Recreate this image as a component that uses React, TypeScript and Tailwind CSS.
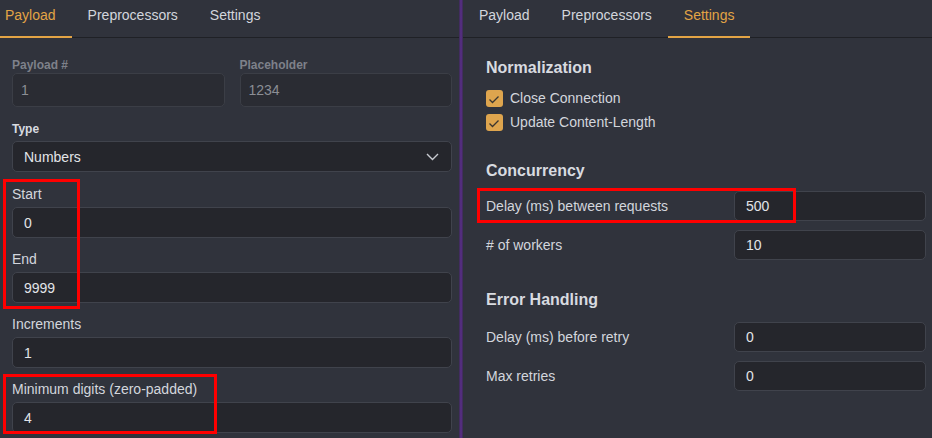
import {ReactNode} from "react";

const font = "font-['Liberation_Sans',Arial,sans-serif]";

function Tabs({active}: {active: string}) {
  const tabs = ["Payload", "Preprocessors", "Settings"];

  return (
    <div className="flex h-[38px] shrink-0 border-b border-[#1f2126]">
      {tabs.map((t) => (
        <div
          key={t}
          className={`-mb-px border-b-2 px-4 pt-[5px] text-sm leading-5 ${
            t === active ? "border-[#e2a445] text-[#e2a445]" : "border-transparent text-[#d3d6dc]"
          }`}
        >
          {t}
        </div>
      ))}
    </div>
  );
}

function Field({label, value}: {label: string; value: string}) {
  return (
    <div className="mb-[11px]">
      <div className="mb-[3px] text-sm leading-5 text-[#d3d6dc]">{label}</div>
      <div className="flex h-[31px] items-center rounded-[5px] border border-[#40434c] bg-[#25262c] px-[11px] text-sm text-[#e2e4e8]">
        {value}
      </div>
    </div>
  );
}

function Row({label, value}: {label: string; value: string}) {
  return (
    <div className="flex items-center">
      <div className="flex-1 text-sm text-[#d3d6dc]">{label}</div>
      <div className="flex h-[30px] w-[192px] items-center rounded-[5px] border border-[#40434c] bg-[#25262c] px-[11px] text-sm text-[#e2e4e8]">
        {value}
      </div>
    </div>
  );
}

function Check({children}: {children: ReactNode}) {
  return (
    <div className="flex h-6 items-center gap-[7px]">
      <div className="flex h-[17px] w-[17px] items-center justify-center rounded-[3px] bg-[#dea54e]">
        <svg fill="none" height="17" viewBox="0 0 17 17" width="17">
          <polyline points="3.5,9.5 6.5,12.5 12.5,6.5" stroke="#3a3630" strokeWidth="1.3" />
        </svg>
      </div>
      <span className="text-sm text-[#d3d6dc]">{children}</span>
    </div>
  );
}

function Heading({children, className = ""}: {children: ReactNode; className?: string}) {
  return <h3 className={`h-6 text-base leading-6 font-bold text-[#d8dbe0] ${className}`}>{children}</h3>;
}

export default function App() {
  return (
    <div className={`relative flex h-[438px] w-[932px] overflow-hidden bg-[#30333c] ${font}`}>
      {/* payload panel */}
      <div className="-ml-[11px] flex w-[470px] shrink-0 flex-col">
        <Tabs active="Payload" />
        <div className="pt-[19px] pr-[7px] pl-[23px]">
          <div className="grid grid-cols-2 gap-[15px]">
            <div>
              <div className="h-4 text-xs leading-4 font-semibold text-[#7e818a]">Payload #</div>
              <div className="flex h-[34px] items-center rounded-[5px] border border-[#3b3e46] bg-[#2a2c33] px-2 text-sm text-[#8b8e95]">
                1
              </div>
            </div>
            <div>
              <div className="h-4 text-xs leading-4 font-semibold text-[#7e818a]">Placeholder</div>
              <div className="flex h-[34px] items-center rounded-[5px] border border-[#3b3e46] bg-[#2a2c33] px-2 text-sm text-[#8b8e95]">
                1234
              </div>
            </div>
          </div>

          <div className="mt-[14px] mb-1 h-4 text-xs leading-4 font-semibold text-[#d8dbe0]">Type</div>
          <div className="mb-3 flex h-[31px] items-center justify-between rounded-[5px] border border-[#40434c] bg-[#25262c] pr-3 pl-[11px] text-sm text-[#e2e4e8]">
            Numbers
            <svg fill="none" height="8" viewBox="0 0 13 8" width="13">
              <polyline points="1,1 6.5,6.5 12,1" stroke="#c8cbd1" strokeWidth="1.4" />
            </svg>
          </div>

          <Field label="Start" value="0" />
          <Field label="End" value="9999" />
          <Field label="Increments" value="1" />
          <Field label="Minimum digits (zero-padded)" value="4" />
        </div>
      </div>

      {/* divider */}
      <div className="w-1 shrink-0 bg-linear-to-r from-[#3a2b52] via-[#5b2d8c] to-[#3a2b52]" />

      {/* settings panel */}
      <div className="flex flex-1 flex-col">
        <Tabs active="Settings" />
        <div className="pt-[18px] pr-[6px] pl-[23px]">
          <Heading>Normalization</Heading>
          <div className="mt-[6px]">
            <Check>Close Connection</Check>
            <Check>Update Content-Length</Check>
          </div>

          <Heading className="mt-[25px]">Concurrency</Heading>
          <div className="mt-2 flex flex-col gap-[9px]">
            <Row label="Delay (ms) between requests" value="500" />
            <Row label="# of workers" value="10" />
          </div>

          <Heading className="mt-[28px]">Error Handling</Heading>
          <div className="mt-[10px] flex flex-col gap-[9px]">
            <Row label="Delay (ms) before retry" value="0" />
            <Row label="Max retries" value="0" />
          </div>
        </div>
      </div>

      {/* annotation boxes */}
      <div className="pointer-events-none absolute top-[179px] left-[3px] h-[130px] w-[77px] border-[3px] border-[#ff0000]" />
      <div className="pointer-events-none absolute top-[374px] left-[3px] h-[60px] w-[214px] border-[3px] border-[#ff0000]" />
      <div className="pointer-events-none absolute top-[188px] left-[477px] h-[35px] w-[319px] border-[3px] border-[#ff0000]" />
    </div>
  );
}
